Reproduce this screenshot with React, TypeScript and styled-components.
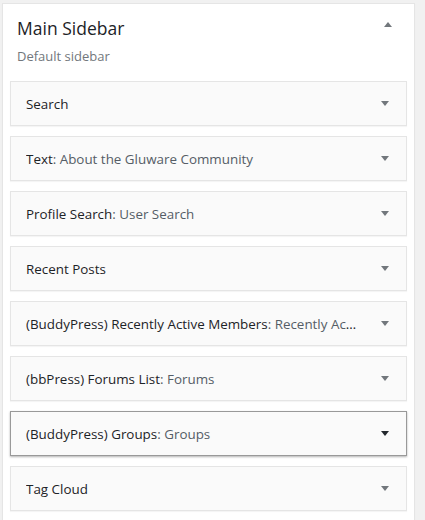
import styled, { createGlobalStyle } from 'styled-components';

const GlobalStyle = createGlobalStyle`
  body {
    margin: 0;
    background: #f1f1f1;
    font-family: 'Open Sans', 'Liberation Sans', sans-serif;
    color: #23282d;
  }
`;

type Widget = {
  name: string;
  title?: string;
  active?: boolean;
};

const widgets: Widget[] = [
  { name: 'Search' },
  { name: 'Text', title: 'About the Gluware Community' },
  { name: 'Profile Search', title: 'User Search' },
  { name: 'Recent Posts' },
  { name: '(BuddyPress) Recently Active Members', title: 'Recently Active Members' },
  { name: '(bbPress) Forums List', title: 'Forums' },
  { name: '(BuddyPress) Groups', title: 'Groups', active: true },
  { name: 'Tag Cloud' },
];

const SidebarPanel = styled.section`
  width: 413px;
  margin: 3px 0 0 2px;
  box-sizing: border-box;
  background: #fff;
  border: 1px solid #e5e5e5;
  box-shadow: 0 1px 1px rgba(0, 0, 0, 0.04);
  padding-bottom: 10px;
`;

const SidebarHeader = styled.header`
  display: flex;
  justify-content: space-between;
  align-items: flex-start;
  padding: 12px 22px 0 14px;
`;

const SidebarName = styled.h2`
  margin: 0;
  font-size: 17.5px;
  line-height: 24px;
  font-weight: 400;
  color: #1d2327;
`;

const Caret = styled.span<{ $up?: boolean; $dark?: boolean }>`
  display: block;
  width: 0;
  height: 0;
  border-left: 4px solid transparent;
  border-right: 4px solid transparent;
  ${({ $up, $dark }) =>
    $up
      ? `border-bottom: 5px solid ${$dark ? '#23282d' : '#72777c'};`
      : `border-top: 5px solid ${$dark ? '#23282d' : '#72777c'};`}
`;

const HeaderCaret = styled.div`
  padding-top: 6px;
`;

const Description = styled.p`
  margin: 6px 0 0 14px;
  font-size: 13px;
  line-height: 20px;
  color: #72777c;
`;

const WidgetList = styled.div`
  display: flex;
  flex-direction: column;
  gap: 10px;
  padding: 15px 7px 0;
`;

const WidgetRow = styled.div<{ $active?: boolean }>`
  display: flex;
  align-items: center;
  height: 45px;
  box-sizing: border-box;
  padding: 0 17px 0 15px;
  background: #fafafa;
  border: 1px solid ${({ $active }) => ($active ? '#999' : '#e5e5e5')};
  box-shadow: ${({ $active }) =>
    $active ? '0 1px 2px rgba(0, 0, 0, 0.3)' : '0 1px 1px rgba(0, 0, 0, 0.04)'};
`;

const WidgetTitle = styled.h3`
  flex: 1;
  min-width: 0;
  margin: 0;
  font-size: 13.4px;
  font-weight: 400;
  line-height: 20px;
  color: #1d2327;
  white-space: nowrap;
  overflow: hidden;
  text-overflow: ellipsis;
  padding-right: 23px;
`;

const InWidgetTitle = styled.span`
  color: #555d66;
`;

export default function App() {
  return (
    <>
      <GlobalStyle />
      <SidebarPanel>
        <SidebarHeader>
          <SidebarName>Main Sidebar</SidebarName>
          <HeaderCaret>
            <Caret $up />
          </HeaderCaret>
        </SidebarHeader>
        <Description>Default sidebar</Description>
        <WidgetList>
          {widgets.map((w) => (
            <WidgetRow key={w.name} $active={w.active}>
              <WidgetTitle>
                {w.name}
                {w.title && <InWidgetTitle>: {w.title}</InWidgetTitle>}
              </WidgetTitle>
              <Caret $dark={w.active} />
            </WidgetRow>
          ))}
        </WidgetList>
      </SidebarPanel>
    </>
  );
}
